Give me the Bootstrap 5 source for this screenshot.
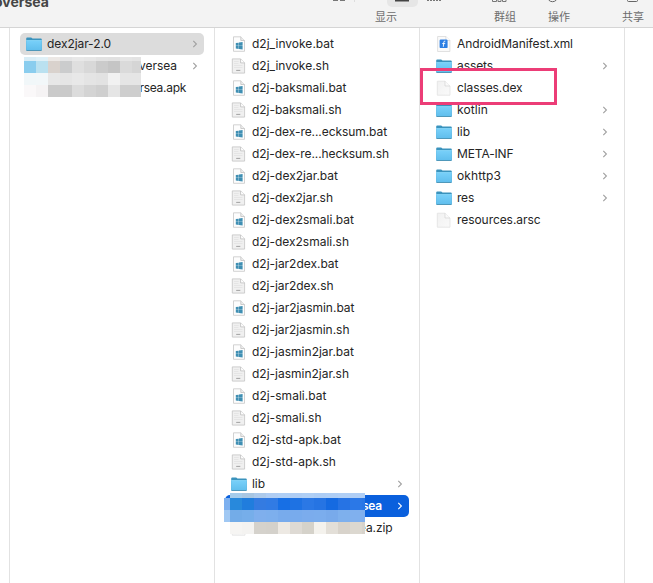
<!DOCTYPE html>
<html lang="zh-CN">
<head>
<meta charset="utf-8">
<title>Finder</title>
<link href="https://cdn.jsdelivr.net/npm/bootstrap@5.3.0/dist/css/bootstrap.min.css" rel="stylesheet">
<style>
body{width:653px;height:583px;font-family:Inter,"Noto Sans CJK SC",sans-serif;font-size:12px;color:#252525;background:#fff}
.toolbar{height:28px;background:#f3f3f3;border-bottom:1px solid #d5d5d5}
.win-title{left:-6px;top:-8px;font-size:14px;line-height:20px;font-weight:700;color:#454545}
.tool-label{top:8px;font-size:11px;line-height:18px;color:#6c6c6c}
.l-view{left:375px}.l-group{left:494px}.l-action{left:548px}.l-share{left:622px}
.gutter{width:10px;border-right:1px solid #e2e2e2}
.pane{width:205px;border-right:1px solid #e2e2e2;padding:5px 10px 0}
.file-row{height:22px;line-height:22px;border-radius:5px;padding-left:5px;padding-right:6px}
.file-row .pic{width:18px;height:18px;margin-right:4px}
.file-row .chev{width:6px;height:10px;margin-left:auto;color:#a0a0a0}
.picked{background:#dcdcdc}
.active-row{background:#0a60dd;color:#fff;font-weight:600}
.active-row .chev{color:#fff}
.tail-dir span{margin-left:85px}
.tail-file span{margin-left:73px}
.tail-zip span{margin-left:76px}
.frame-mark{left:420px;top:68px;width:137px;height:37px;border:3px solid #ec3d77}
</style>
<script src="https://cdn.jsdelivr.net/npm/bootstrap@5.3.0/dist/js/bootstrap.bundle.min.js"></script>
</head>
<body class="position-relative overflow-hidden m-0">
<svg class="position-absolute" width="0" height="0">
<defs>
<linearGradient id="fg" x2="0" y2="1"><stop stop-color="#79d1fa"/><stop offset="1" stop-color="#5fbdec"/></linearGradient>
<linearGradient id="pg" x2="1" y2="1"><stop stop-color="#f1f1f1"/><stop offset="1" stop-color="#fafafa"/></linearGradient>
</defs>
<symbol id="folder" viewBox="0 0 18 18"><path d="M1.2 3.4Q1.2 2.4 2.2 2.4H6.2L7.5 3.4H15.8Q16.8 3.4 16.8 4.4V15.2H1.2Z" fill="#3a93bd"/><path d="M1.2 5.2H16.8V14.8Q16.8 15.8 15.8 15.8H2.2Q1.2 15.8 1.2 14.8Z" fill="url(#fg)"/><path d="M1.2 5.5H16.8" stroke="#91dcfc" stroke-width=".6"/><path d="M1.5 15.5H16.5" stroke="#4b93b4" stroke-width=".9"/></symbol>
<symbol id="bat" viewBox="0 0 18 18"><path d="M3.500 1.800H10.800L14.500 5.500V16.300H3.500Z" fill="#fdfdfd" stroke="#c7c7c7" stroke-width=".8"/><path d="M10.800 1.800V5.500H14.500" fill="#eee" stroke="#bcbcbc" stroke-width=".7"/><path d="M5.800 8.100 8.700 7.700V10.700H5.800ZM9 7.600 12.600 7.100V10.700H9ZM5.800 11H8.700V14L5.800 13.600ZM9 11H12.600V14.600L9 14.100Z" fill="#3f8fb3"/></symbol>
<symbol id="sh" viewBox="0 0 18 18"><path d="M2.300 1.900H10.600L14.600 5.900V16.100H2.300Z" fill="#f0f0f0" stroke="#c3c3c3" stroke-width=".8"/><path d="M10.600 1.900V5.900H14.600" fill="#fff" stroke="#bcbcbc" stroke-width=".8"/><path d="M4 4.500H8.700M4 6.500H8.500M4 8.500H12.500M4 10.500H12.500" stroke="#e2e2e2" stroke-width=".8"/><path d="M6.200 13.400H10.300" stroke="#999" stroke-width=".9"/></symbol>
<symbol id="doc" viewBox="0 0 18 18"><path d="M2.300 2.200H10L15 7V16.200H2.300Z" fill="url(#pg)" stroke="#dfdfdf" stroke-width=".7"/><path d="M10 2.200V7H15" fill="#fafafa" stroke="#d2d2d2" stroke-width=".7"/></symbol>
<symbol id="xml" viewBox="0 0 18 18"><path d="M2.600 1.500H10.900L14.900 5.500V16.500H2.600Z" fill="#fafafa" stroke="#d6d6d6" stroke-width=".7"/><path d="M10.900 1.500V5.500H14.900" fill="#fff" stroke="#d2d2d2" stroke-width=".7"/><rect x="4.600" y="4.600" width="8" height="8.500" rx="1.200" fill="#2c7fe3"/><path d="M10.300 6.200Q8.900 5.800 8.800 7.200L8.300 11.800M7.200 8.600H10.200" stroke="#fff" stroke-width=".9" fill="none"/></symbol>
<symbol id="chev" viewBox="0 0 6 10"><path d="M1.300 1.900 4.400 5 1.300 8.100" fill="none" stroke="currentColor" stroke-width="1.100"/></symbol>
</svg>

<header class="toolbar position-relative overflow-hidden">
<div class="win-title position-absolute">oversea</div>
<svg class="position-absolute top-0 start-0" width="653" height="10">
<path d="M333 0h5M340 0h5" stroke="#777" stroke-width="2"/>
<path d="M354.500 0V2" stroke="#ddd"/>
<rect x="387" y="-10" width="31" height="17" rx="5" fill="#e6e6e6"/>
<path d="M395 0H409" stroke="#444" stroke-width="3"/>
<path d="M427 .3H442" stroke="#777" stroke-width="1.600" stroke-dasharray="2 1"/>
<path d="M492.500 -1V1.500H496.500V-1M498 -1V1.500H501V-1M502.500 -1V1.500H506V-1" fill="none" stroke="#777"/>
<circle cx="552.500" cy="-3.500" r="5.200" fill="none" stroke="#666"/>
<rect x="627.500" y="-7" width="10" height="8.500" rx="1" fill="none" stroke="#666"/>
</svg>
<span class="tool-label position-absolute l-view">显示</span>
<span class="tool-label position-absolute l-group">群组</span>
<span class="tool-label position-absolute l-action">操作</span>
<span class="tool-label position-absolute l-share">共享</span>
</header>

<main class="d-flex" style="height:555px">
<div class="gutter flex-shrink-0"></div>
<section class="pane flex-shrink-0" id="p1"></section>
<section class="pane flex-shrink-0" id="p2"></section>
<section class="pane flex-shrink-0" id="p3"></section>
</main>

<svg class="position-absolute top-0 start-0 pe-none" width="653" height="583" id="mosaic" shape-rendering="crispEdges"></svg>
<div class="frame-mark position-absolute"></div>

<script>
// Each entry: icon, name, width of the name, opens a folder, row style
const panes = {
 p1:[['folder','dex2jar-2.0',64,1,'picked'],['folder','oversea',45,1,'tail-dir'],['doc','oversea.apk',66,0,'tail-file']],
 p2:[['bat','d2j_invoke.bat',82],['sh','d2j_invoke.sh',77],['bat','d2j-baksmali.bat',94.500],['sh','d2j-baksmali.sh',89.500],
 ['bat','d2j-dex-re...ecksum.bat',135],['sh','d2j-dex-re...hecksum.sh',137],['bat','d2j-dex2jar.bat',86],['sh','d2j-dex2jar.sh',81],
 ['bat','d2j-dex2smali.bat',102],['sh','d2j-dex2smali.sh',97],['bat','d2j-jar2dex.bat',86.500],['sh','d2j-jar2dex.sh',81.500],
 ['bat','d2j-jar2jasmin.bat',102.500],['sh','d2j-jar2jasmin.sh',97.500],['bat','d2j-jasmin2jar.bat',102],['sh','d2j-jasmin2jar.sh',97],
 ['bat','d2j-smali.bat',74.500],['sh','d2j-smali.sh',69.500],['bat','d2j-std-apk.bat',89],['sh','d2j-std-apk.sh',84],
 ['folder','lib',13,1],['folder','oversea',45,1,'active-row tail-dir'],['doc','oversea.zip',64.500,0,'tail-zip']],
 p3:[['xml','AndroidManifest.xml',116],['folder','assets',36,1],['doc','classes.dex',65.500],['folder','kotlin',31,1],['folder','lib',13,1],
 ['folder','META-INF',56.500,1],['folder','okhttp3',44,1],['folder','res',17,1],['doc','resources.arsc',83.500]]
};
for (const id in panes)
 document.getElementById(id).innerHTML = panes[id].map(([ic,name,w,open,cls='']) =>
 `<div class="file-row d-flex align-items-center ${cls}"><svg class="pic flex-shrink-0"><use href="#${ic}"/></svg><span class="text-nowrap" data-w="${w}">${name}</span>${open?'<svg class="chev flex-shrink-0"><use href="#chev"/></svg>':''}</div>`).join('');
document.querySelectorAll('[data-w]').forEach(e => {
 e.style.letterSpacing = (e.dataset.w - e.getBoundingClientRect().width) / e.textContent.length + 'px';
});
// Pixelated blocks over the private names: x, y, height, colours of 12px cells, total width
const bands = [
 [24,57,4,'d9edf6 dff0f7 ece8e5 e4e4e5 e8e8e8 e6e6e6 e2e2e2 e1e1e1 e5e5e5 e3e3e3',117],
 [24,61,12,'8acdee bae1f0 d9d2cd cbcccd dfdfdf d8d8d8 cbcbcb c5c5c5 dadada d5d5d5',117],
 [24,73,12,'f1f7f9 f2f7f9 e7e7e7 e5e5e5 e8e8e8 e4e4e4 e2e2e2 f1f1f1 e5e5e5 e5e5e5',117],
 [24,85,12,'faf8f9 f5f3f4 cacaca cacaca dcdcdc d4d4d4 cfcfcf e5e5e5 cecece cecece',117],
 [230,493,5,'a5cceb a8c6e2 adcaeb b0cdf3 b0cff5 afcdf4 b0cff5 adcdf5 afcef5 b1cff5 b0cef5 afcef5',135],
 [224,498,12,'7db0ef',6],
 [230,498,12,'2889dc 207ddd 347be1 317be4 176fe5 1e72e3 2b78e5 2674e3 156ae1 2673e4 2b78e7 2876e6',135],
 [224,510,12,'a0c8f3',6],
 [230,510,12,'73ace8 76aeea 7fafed 7dafed 78abec 78abed 7baced 7baded 78aaeb 7eb0ed 80b0ee 7fafee',135],
 [230,522,12,'f6f5f3 f4f3f1 d5d2cc d4d1cb ede9e3 dedad4 d5d2ca f4f2ed e3dfd8 d8d3cb dcd8d0 d7d3cc',135]
];
document.getElementById('mosaic').innerHTML = bands.map(([x,y,h,c,w]) =>
 c.split(' ').map((k,i) => `<rect x="${x+i*12}" y="${y}" width="${Math.min(12,w-i*12)}" height="${h}" fill="#${k}"/>`).join('')).join('');
</script>
</body>
</html>
